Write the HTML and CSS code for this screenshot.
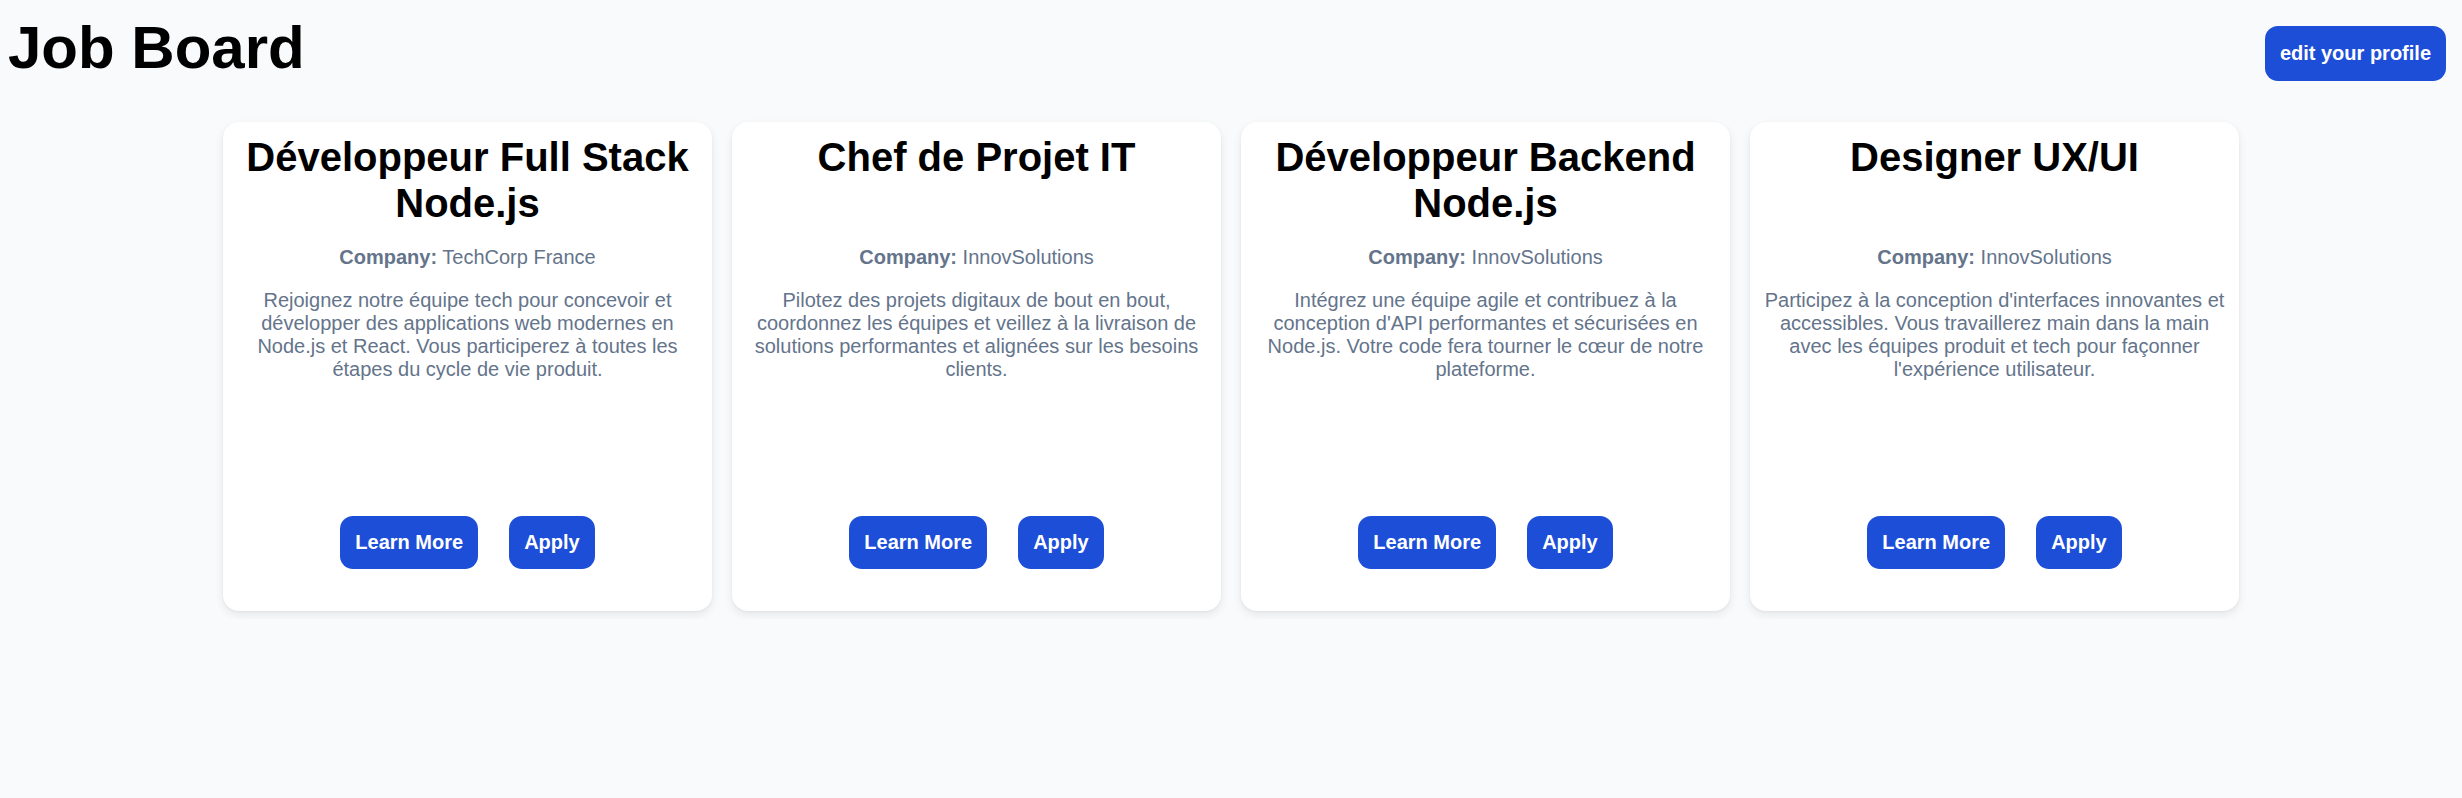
FILE: index.html
```html
<!DOCTYPE html>
<html lang="fr">
<head>
<meta charset="utf-8">
<title>Job Board</title>
<link rel="stylesheet" href="styles.css">
</head>
<body>
<header class="top">
  <h1 class="brand">Job Board</h1>
  <button class="btn btn-profile">edit your profile</button>
</header>
<main class="board">
  <article class="card">
    <h2 class="card-title">Développeur Full Stack Node.js</h2>
    <p class="company"><strong>Company:</strong> TechCorp France</p>
    <p class="desc">Rejoignez notre équipe tech pour concevoir et développer des applications web modernes en Node.js et React. Vous participerez à toutes les étapes du cycle de vie produit.</p>
    <div class="actions"><button class="btn">Learn More</button><button class="btn">Apply</button></div>
  </article>
  <article class="card">
    <h2 class="card-title">Chef de Projet IT</h2>
    <p class="company"><strong>Company:</strong> InnovSolutions</p>
    <p class="desc">Pilotez des projets digitaux de bout en bout, coordonnez les équipes et veillez à la livraison de solutions performantes et alignées sur les besoins clients.</p>
    <div class="actions"><button class="btn">Learn More</button><button class="btn">Apply</button></div>
  </article>
  <article class="card">
    <h2 class="card-title">Développeur Backend Node.js</h2>
    <p class="company"><strong>Company:</strong> InnovSolutions</p>
    <p class="desc">Intégrez une équipe agile et contribuez à la conception d'API performantes et sécurisées en Node.js. Votre code fera tourner le cœur de notre plateforme.</p>
    <div class="actions"><button class="btn">Learn More</button><button class="btn">Apply</button></div>
  </article>
  <article class="card">
    <h2 class="card-title">Designer UX/UI</h2>
    <p class="company"><strong>Company:</strong> InnovSolutions</p>
    <p class="desc">Participez à la conception d'interfaces innovantes et accessibles. Vous travaillerez main dans la main avec les équipes produit et tech pour façonner l'expérience utilisateur.</p>
    <div class="actions"><button class="btn">Learn More</button><button class="btn">Apply</button></div>
  </article>
</main>
</body>
</html>
```

FILE: styles.css
```css
html, body {
  margin: 0;
  background: #f9fafb;
}
body {
  padding: 8px;
  font-family: "Liberation Sans", Arial, sans-serif;
  color: #000;
}
.top {
  display: flex;
  justify-content: space-between;
  align-items: flex-start;
}
.brand {
  margin: 5px 0 0 0;
  font-size: 60px;
  font-weight: 700;
  line-height: normal;
}
.btn {
  font-family: "Liberation Sans", Arial, sans-serif;
  font-size: 20px;
  font-weight: 700;
  line-height: 23px;
  color: #fff;
  background: #1d4ed8;
  border: none;
  border-radius: 13px;
  padding: 15px 15px;
  cursor: pointer;
}
.btn-profile {
  margin-top: 18px;
  margin-right: 8px;
  padding: 16px 15px;
}
.board {
  display: grid;
  grid-template-columns: repeat(4, 489px);
  gap: 20px;
  justify-content: center;
  margin-top: 40px;
}
.card {
  box-sizing: border-box;
  height: 489px;
  background: #fff;
  border-radius: 16px;
  box-shadow: 0 4px 10px rgba(15, 23, 42, 0.08), 0 1px 3px rgba(15, 23, 42, 0.05);
  padding: 12px 12px 42px;
  display: flex;
  flex-direction: column;
  text-align: center;
}
.card-title {
  margin: 0;
  font-size: 40px;
  font-weight: 700;
  line-height: 46px;
  min-height: 92px;
}
.company {
  margin: 20px 0 0;
  font-size: 20px;
  line-height: 23px;
  color: #64748b;
}
.desc {
  margin: 20px 0 0;
  font-size: 20px;
  line-height: 23px;
  color: #64748b;
}
.actions {
  margin-top: auto;
  display: flex;
  justify-content: center;
  gap: 31px;
}
```
